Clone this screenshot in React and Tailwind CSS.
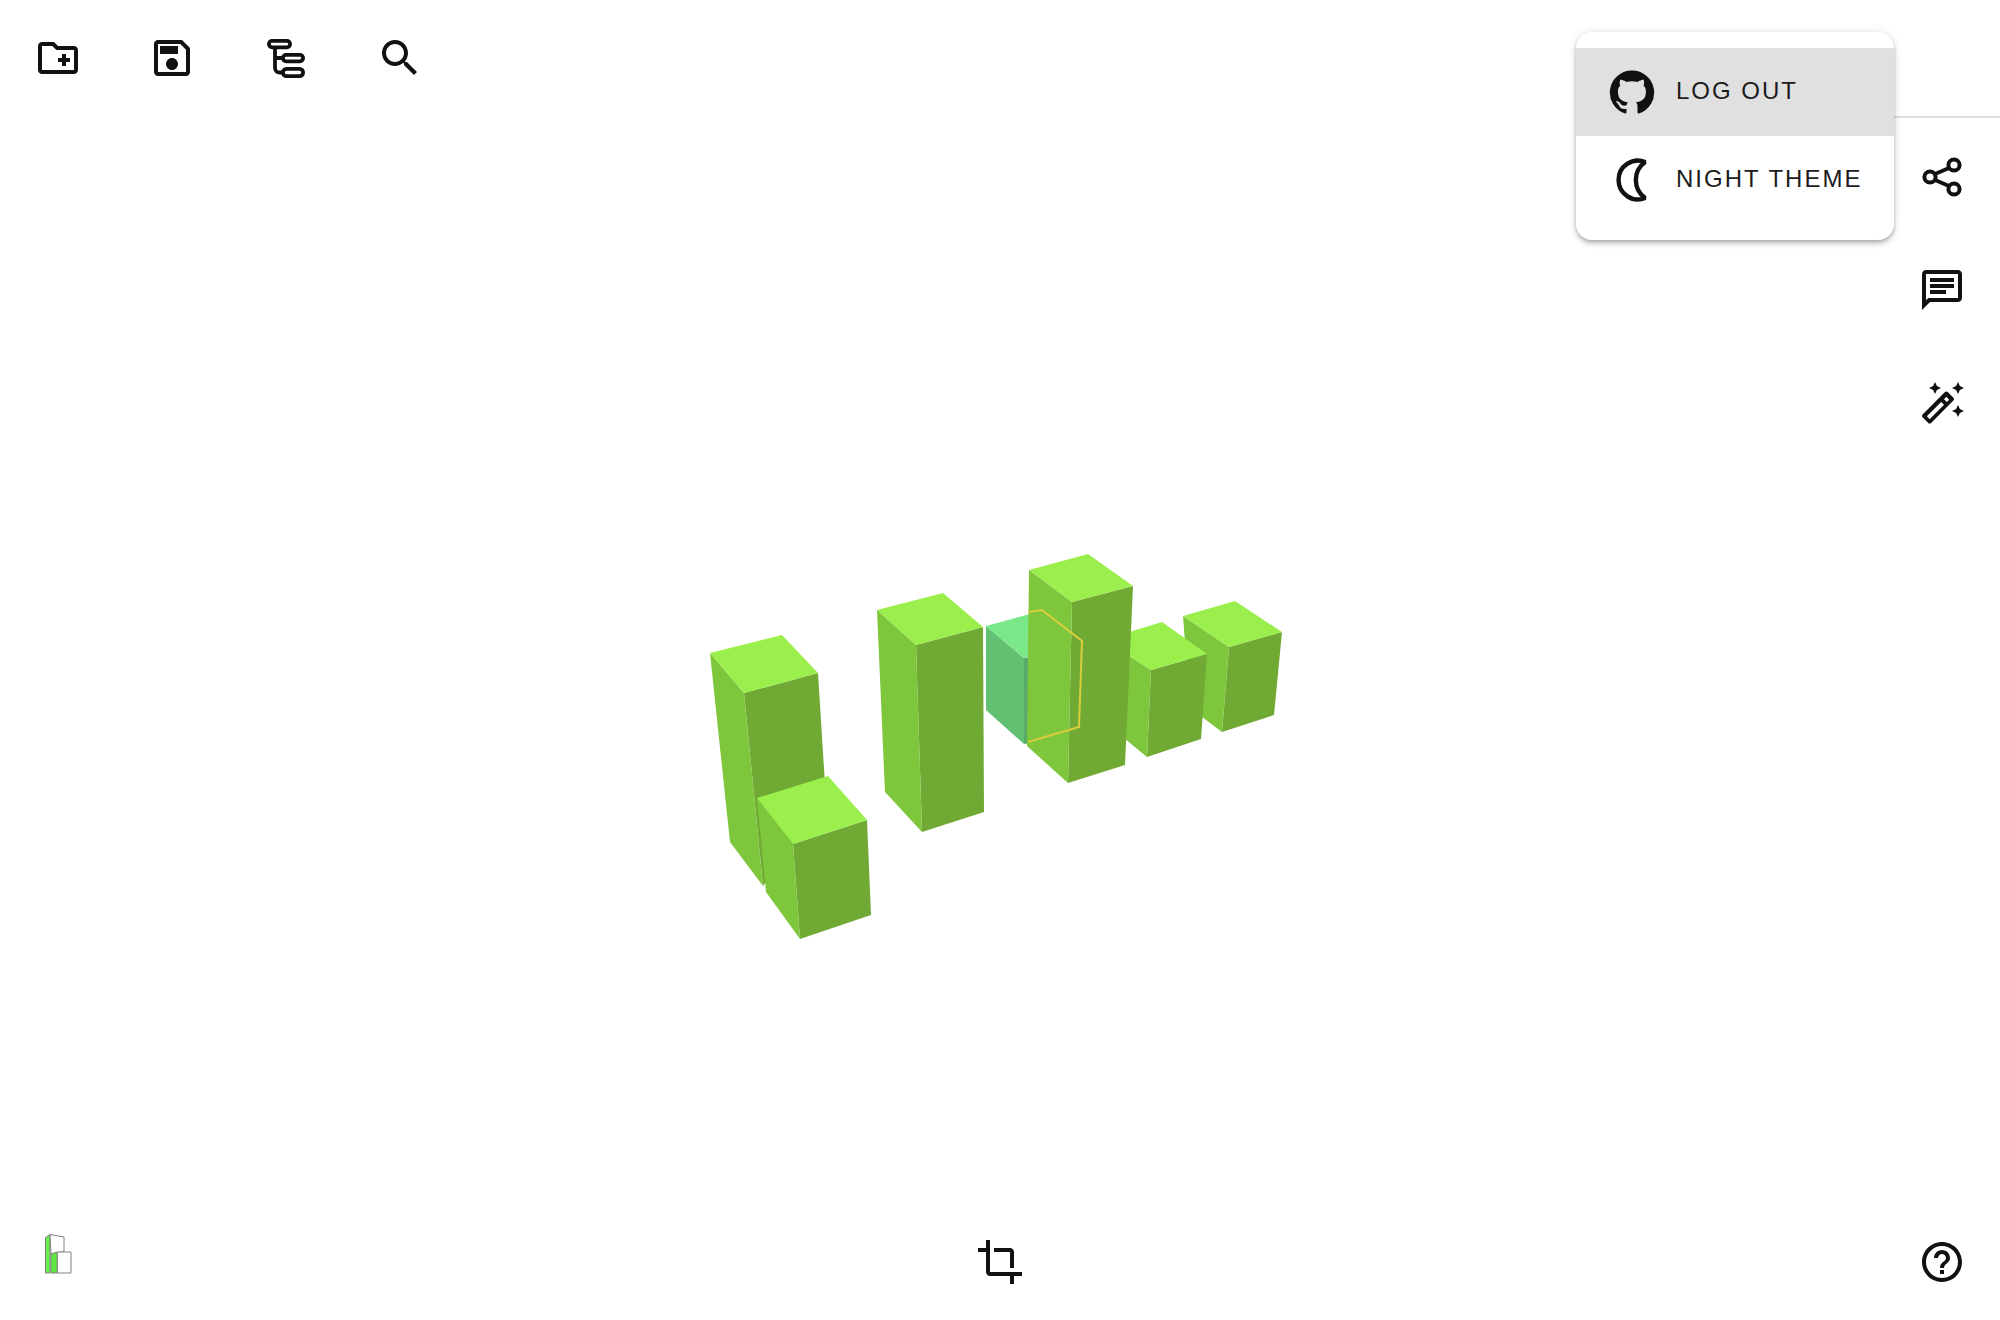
const TOP = '#9bef4d';
const LEFT = '#7ec63c';
const RIGHT = '#70aa35';

const PATHS = {
  folder: 'M20 6h-8l-2-2H4c-1.11 0-1.99.89-1.99 2L2 18c0 1.11.89 2 2 2h16c1.11 0 2-.89 2-2V8c0-1.11-.89-2-2-2zm0 12H4V6h5.17l2 2H20v10zm-8-4h2v2h2v-2h2v-2h-2v-2h-2v2h-2z',
  save: 'M17 3H5c-1.11 0-2 .9-2 2v14c0 1.1.89 2 2 2h14c1.1 0 2-.9 2-2V7l-4-4zm2 16H5V5h11.17L19 7.83V19zm-7-7c-1.66 0-3 1.34-3 3s1.34 3 3 3 3-1.34 3-3-1.34-3-3-3zM6 6h9v4H6z',
  search: 'M15.5 14h-.79l-.28-.27C15.41 12.59 16 11.11 16 9.5 16 5.91 13.09 3 9.5 3S3 5.91 3 9.5 5.91 16 9.5 16c1.61 0 3.09-.59 4.23-1.57l.27.28v.79l5 4.99L20.49 19l-4.99-5zm-6 0C7.01 14 5 11.99 5 9.5S7.01 5 9.5 5 14 7.01 14 9.5 11.99 14 9.5 14z',
  chat: 'M4 4h16v12H5.17L4 17.17V4m0-2c-1.1 0-1.99.9-1.99 2L2 22l4-4h14c1.1 0 2-.9 2-2V4c0-1.1-.9-2-2-2H4zm2 10h8v2H6v-2zm0-3h12v2H6V9zm0-3h12v2H6V6z',
  wand: 'M20 7l.94-2.06L23 4l-2.06-.94L20 1l-.94 2.06L17 4l2.06.94zM8.5 7l.94-2.06L11.5 4l-2.06-.94L8.5 1l-.94 2.06L5.5 4l2.06.94zM20 12.5l-.94 2.06-2.06.94 2.06.94.94 2.06.94-2.06L23 15.5l-2.06-.94zm-2.29-3.63l-2.83-2.83C14.68 5.85 14.43 5.75 14.17 5.75c-.25 0-.5.1-.7.29L2.29 17.21c-.39.39-.39 1.02 0 1.41l2.83 2.83c.2.2.45.3.71.3s.51-.1.71-.29l11.17-11.17c.39-.39.39-1.03 0-1.42zM14.17 8.42l1.41 1.41L14.41 11 13 9.59l1.17-1.17zM5.83 19.59l-1.41-1.41L11.59 11 13 12.41l-7.17 7.18z',
  crop: 'M17 15h2V7c0-1.1-.9-2-2-2H9v2h8v8zM7 17V1H5v4H1v2h4v10c0 1.1.9 2 2 2h10v4h2v-4h4v-2H7z',
  help: 'M11 18h2v-2h-2v2zm1-16C6.48 2 2 6.48 2 12s4.48 10 10 10 10-4.48 10-10S17.52 2 12 2zm0 18c-4.41 0-8-3.59-8-8s3.59-8 8-8 8 3.59 8 8-3.59 8-8 8zm0-14c-2.21 0-4 1.79-4 4h2c0-1.1.9-2 2-2s2 .9 2 2c0 2-3 1.75-3 5h2c0-2.25 3-2.5 3-5 0-2.21-1.79-4-4-4z',
  github: 'M12 1.27a11 11 0 00-3.48 21.46c.55.09.73-.28.73-.55v-1.84c-3.03.64-3.67-1.46-3.67-1.46-.55-1.29-1.28-1.65-1.28-1.65-.92-.65.1-.65.1-.65 1.1 0 1.73 1.1 1.73 1.1.92 1.65 2.57 1.2 3.21.92a2 2 0 01.64-1.47c-2.47-.27-5.04-1.19-5.04-5.5 0-1.1.46-2.1 1.2-2.84a3.76 3.76 0 010-2.93s.91-.28 3.11 1.1c1.8-.49 3.7-.49 5.5 0 2.1-1.38 3.02-1.1 3.02-1.1a3.76 3.76 0 010 2.93c.83.74 1.2 1.74 1.2 2.94 0 4.21-2.57 5.13-5.04 5.4.45.37.82.92.82 2.02v3.03c0 .27.1.64.73.55A11 11 0 0012 1.27',
};

function Icon({ name }) {
  return (
    <svg viewBox="0 0 24 24" className="block h-12 w-12 shrink-0 text-[#111]" fill="currentColor">
      <path d={PATHS[name]} />
    </svg>
  );
}

function ShareIcon() {
  return (
    <svg viewBox="0 0 48 48" className="block h-12 w-12 shrink-0 text-[#111]" fill="none" stroke="currentColor" strokeWidth="4">
      <path d="M17 21L31 15M17 27L31 33" />
      <circle cx="36" cy="12" r="5.6" />
      <circle cx="12" cy="24" r="5.6" />
      <circle cx="36" cy="36" r="5.6" />
    </svg>
  );
}

function TreeIcon() {
  return (
    <svg viewBox="0 0 48 48" className="block h-12 w-12 shrink-0 text-[#111]" fill="none" stroke="currentColor" strokeWidth="3.8">
      <rect x="6.9" y="6.9" width="21.2" height="6.4" rx="3.2" />
      <rect x="20.9" y="20.9" width="20.2" height="6.4" rx="3.2" />
      <rect x="20.9" y="34.9" width="20.2" height="7.2" rx="3.6" />
      <path d="M13 15V34a4.5 4.5 0 0 0 4.5 4.5h3M13 24h8" />
    </svg>
  );
}

function MoonIcon() {
  return (
    <svg viewBox="0 0 24 24" className="block h-12 w-12 shrink-0 text-[#111]" fill="none" stroke="currentColor" strokeWidth="2.2">
      <path d="M18.6 3A9.7 9.7 0 1 0 18.6 21A11 11 0 0 1 18.6 3Z" strokeLinejoin="bevel" />
    </svg>
  );
}

function Logo() {
  return (
    <svg viewBox="0 0 27 40" className="block h-10 w-[27px]" stroke="#808080" strokeWidth="1">
      <polygon points="0.5,3.4 5,0.7 5,39 0.5,39" fill="#66f04a" />
      <polygon points="5,0.5 19,3 19,17.5 6,20" fill="#ffffff" />
      <polygon points="6,20 12.3,18 12.3,39 6,39" fill="#5ee842" />
      <polygon points="12.3,18 26,18 26,39 12.3,39" fill="#ffffff" />
    </svg>
  );
}

function Box({ top, left, right, c = [TOP, LEFT, RIGHT] }) {
  return (
    <g>
      <polygon points={right} fill={c[2]} />
      <polygon points={left} fill={c[1]} />
      <polygon points={top} fill={c[0]} />
    </g>
  );
}

function Scene() {
  return (
    <svg viewBox="0 0 2000 1320" className="absolute inset-0 h-full w-full">
      <Box
        top="710,653 782,635 818,673 744,693"
        left="710,653 744,693 763,886 730,842"
        right="744,693 818,673 826,800 763,886"
      />
      <Box
        top="757,798 828,776 867,820 793,844"
        left="757,798 793,844 800,939 766,892"
        right="793,844 867,820 871,915 800,939"
      />
      <Box
        top="877,610 943,593 983,627 916,645"
        left="877,610 916,645 922,832 885,792"
        right="916,645 983,627 984,812 922,832"
      />
      <Box
        top="986,626 1030,614 1030,657 1024,658"
        left="986,626 1024,658 1024,744 986,710"
        right="1024,658 1030,657 1030,743 1024,744"
        c={['#7ae888', '#62c072', '#5aab6a']}
      />
      <Box
        top="1183,616 1235,601 1282,632 1229,647"
        left="1183,616 1229,647 1222,732 1190,708"
        right="1229,647 1282,632 1274,715 1222,732"
      />
      <Box
        top="1126,633 1162,622 1207,654 1151,670 1126,654"
        left="1126,654 1151,670 1147,757 1124,738"
        right="1151,670 1207,654 1201,739 1147,757"
      />
      <Box
        top="1029,570 1088,554 1133,586 1072,602"
        left="1029,570 1072,602 1068,783 1027,746"
        right="1072,602 1133,586 1125,765 1068,783"
      />
      <polyline
        points="1028,612 1042,610 1082,641 1079,727 1028,742"
        fill="none"
        stroke="#d9cf3c"
        strokeWidth="2"
      />
    </svg>
  );
}

function MenuRow({ icon, label, active }) {
  return (
    <div className={`flex h-[88px] items-center gap-5 pl-8 ${active ? 'bg-[#e0e0e0]' : ''}`}>
      {icon}
      <span className="-mt-0.5 text-[24px] leading-none tracking-[2px] text-[#1c1c1c]">{label}</span>
    </div>
  );
}

export default function App() {
  return (
    <div className="relative flex h-[1320px] w-[2000px] flex-col justify-between overflow-hidden bg-white font-['Liberation_Sans',sans-serif]">
      <Scene />

      <div className="relative flex flex-1 items-start justify-between">
        <div className="flex gap-[66px] pl-[34px] pt-[34px]">
          <Icon name="folder" />
          <Icon name="save" />
          <TreeIcon />
          <Icon name="search" />
        </div>
        <div className="flex w-[106px] flex-col">
          <div className="h-[118px] border-b-2 border-[#e0e0e0]" />
          <div className="flex flex-col pl-6 pt-[35px]">
            <ShareIcon />
            <div className="mt-[65px]">
              <Icon name="chat" />
            </div>
            <div className="mt-[66px]">
              <Icon name="wand" />
            </div>
          </div>
        </div>
      </div>

      <div className="relative grid grid-cols-3 pb-[34px]">
        <div className="-mt-1 pl-[45px]">
          <Logo />
        </div>
        <div className="flex justify-center">
          <Icon name="crop" />
        </div>
        <div className="flex justify-end pr-[34px]">
          <Icon name="help" />
        </div>
      </div>

      <div className="absolute right-[106px] top-8 w-[318px] rounded-2xl bg-white py-4 shadow-[0_2px_4px_-1px_rgba(0,0,0,0.2),0_4px_5px_0_rgba(0,0,0,0.14),0_1px_10px_0_rgba(0,0,0,0.12)]">
        <MenuRow icon={<Icon name="github" />} label="LOG OUT" active />
        <MenuRow icon={<MoonIcon />} label="NIGHT THEME" />
      </div>
    </div>
  );
}
